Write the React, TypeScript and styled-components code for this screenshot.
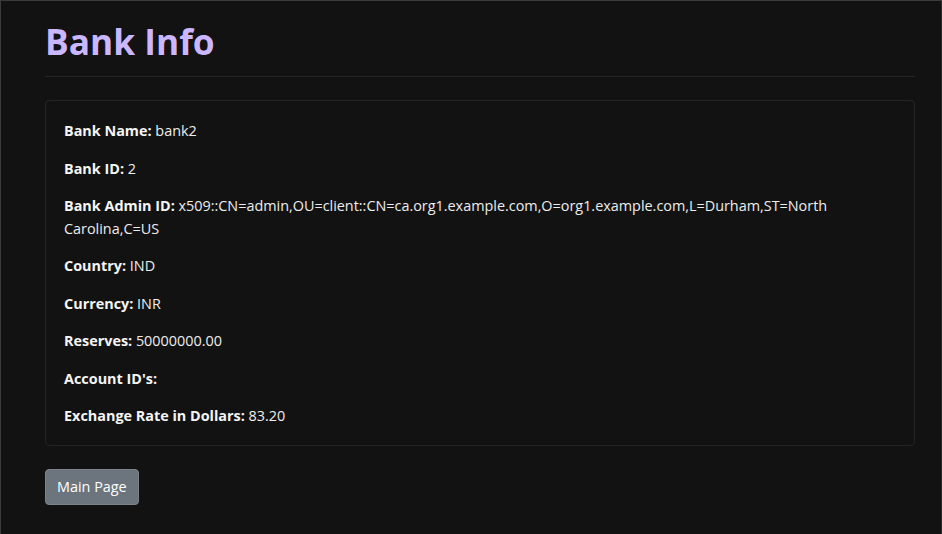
import React from 'react';
import styled, {createGlobalStyle} from 'styled-components';

const GlobalStyle = createGlobalStyle`
  * { box-sizing: border-box; }
  html, body {
    margin: 0;
    padding: 0;
    background: #121212;
  }
  body {
    font-family: "Open Sans", "Noto Sans", sans-serif;
    color: #e6e6e6;
  }
`

interface IField {
    label: string
    value?: string
}

const fields: IField[] = [
    {label: "Bank Name:", value: "bank2"},
    {label: "Bank ID:", value: "2"},
    {label: "Bank Admin ID:", value: "x509::CN=admin,OU=client::CN=ca.org1.example.com,O=org1.example.com,L=Durham,ST=North Carolina,C=US"},
    {label: "Country:", value: "IND"},
    {label: "Currency:", value: "INR"},
    {label: "Reserves:", value: "50000000.00"},
    {label: "Account ID's:"},
    {label: "Exchange Rate in Dollars:", value: "83.20"},
]

const App = () => {
    return (
        <>
            <GlobalStyle/>
            <Page>
                <Title>Bank Info</Title>
                <Divider/>
                <Card>
                    {fields.map(f =>
                        <Field key={f.label}>
                            <Label>{f.label}</Label>{f.value ? " " + f.value : ""}
                        </Field>
                    )}
                </Card>
                <Button>Main Page</Button>
            </Page>
        </>
    );
};

export default App;

const Page = styled.div`
  width: 942px;
  height: 534px;
  border-top: 1px solid #3b3b3b;
  border-left: 1px solid #3b3b3b;
  border-right: 1px solid #2a2a2a;
  padding: 17px 26px 0 44px;
  display: flex;
  flex-direction: column;
  align-items: flex-start;
`
const Title = styled.h1`
  margin: 0;
  font-size: 35.3px;
  font-weight: 700;
  line-height: 46px;
  color: #cbb7ff;
`
const Divider = styled.hr`
  width: 100%;
  margin: 12px 0 23px 0;
  border: none;
  border-top: 1px solid #242424;
`
const Card = styled.div`
  width: 100%;
  border: 1px solid #242424;
  border-radius: 4px;
  padding: 19px 18px 2px 18px;
  margin-bottom: 23px;
`
const Field = styled.p`
  margin: 0 0 15px 0;
  font-size: 14.4px;
  line-height: 22.5px;
  color: #ededed;
`
const Label = styled.b`
  font-weight: 700;
  color: #f5f5f5;
`
const Button = styled.button`
  font-family: inherit;
  font-size: 14.4px;
  color: #fff;
  background: #6c757d;
  border: 1px solid #7c848b;
  border-radius: 4px;
  padding: 0 11px;
  height: 36px;
  cursor: pointer;
`
